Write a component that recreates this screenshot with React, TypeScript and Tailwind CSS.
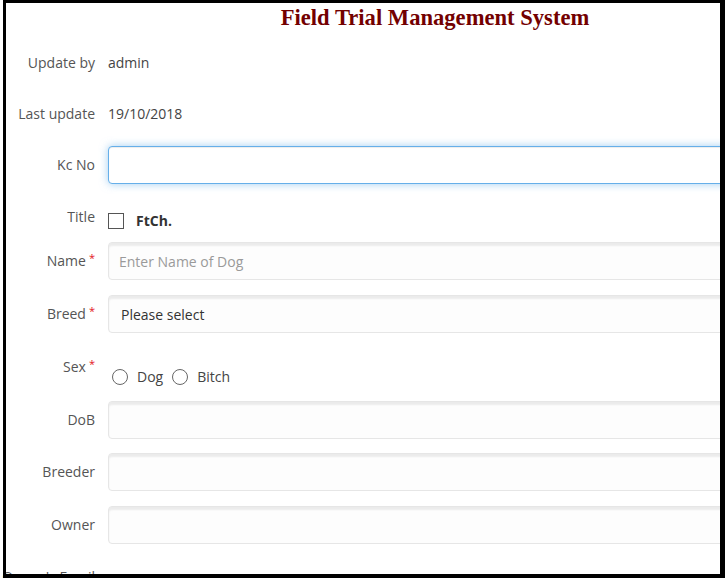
const labelFont = { fontFamily: '"Open Sans", "Liberation Sans", sans-serif' };

function Req() {
  return <span className="relative -top-[4px] ml-[3px] text-[11px] text-[#e3141b]">*</span>;
}

function Row({
  label,
  required,
  className = "",
  children,
}: {
  label: string;
  required?: boolean;
  className?: string;
  children?: React.ReactNode;
}) {
  return (
    <div className={`flex ${className}`}>
      <div className="w-[95px] shrink-0 whitespace-nowrap pt-[9px] text-right text-[14px] leading-[20px] text-[#555]">
        {label}
        {required && <Req />}
      </div>
      <div className="ml-[13px] flex-1">{children}</div>
    </div>
  );
}

function Field({ children }: { children?: React.ReactNode }) {
  return (
    <div className="flex h-[38px] items-center rounded-[4px] border border-[#e6e6e6] bg-[#fdfdfd] shadow-[inset_0_3px_2px_rgba(0,0,0,0.07)]">
      {children}
    </div>
  );
}

export default function App() {
  return (
    <div className="relative h-[578px] w-[725px] overflow-hidden bg-white" style={labelFont}>
      <div className="w-[870px]">
        <h1
          className="pt-[5px] text-center text-[22.6px] font-bold leading-[25px] text-[#730000]"
          style={{ fontFamily: '"Liberation Serif", "Times New Roman", serif' }}
        >
          Field Trial Management System
        </h1>

        <Row label="Update by" className="mt-[14px] h-[38px]">
          <div className="pt-[9px] text-[14px] leading-[20px] text-[#444]">admin</div>
        </Row>

        <Row label="Last update" className="mt-[13px] h-[38px]">
          <div className="pt-[9px] text-[14px] leading-[20px] text-[#444]">19/10/2018</div>
        </Row>

        <Row label="Kc No" className="mt-[13px]">
          <div className="h-[38px] rounded-[4px] border border-[#66afe9] bg-white shadow-[inset_0_1px_1px_rgba(0,0,0,0.075),0_0_8px_rgba(102,175,233,0.6)]" />
        </Row>

        <Row label="Title" className="mt-[14px] h-[44px]">
          <div className="mt-[12px] flex items-center">
            <span className="h-[16px] w-[16px] border-[1.5px] border-[#555] bg-white" />
            <span className="ml-[12px] text-[14px] font-bold text-[#333]">FtCh.</span>
          </div>
        </Row>

        <Row label="Name" required>
          <Field>
            <span className="pl-[10px] text-[14px] text-[#9a9a9a]">Enter Name of Dog</span>
          </Field>
        </Row>

        <Row label="Breed" required className="mt-[15px]">
          <Field>
            <span className="pl-[12px] text-[14px] text-[#333]">Please select</span>
          </Field>
        </Row>

        <Row label="Sex" required className="mt-[15px] h-[38px]">
          <div className="mt-[18px] flex items-center pl-[4px] text-[14px] text-[#444]">
            <span className="h-[16px] w-[16px] rounded-full border border-[#666] bg-white" />
            <span className="ml-[9px]">Dog</span>
            <span className="ml-[9px] h-[16px] w-[16px] rounded-full border border-[#666] bg-white" />
            <span className="ml-[9px]">Bitch</span>
          </div>
        </Row>

        <Row label="DoB" className="mt-[15px]">
          <Field />
        </Row>

        <Row label="Breeder" className="mt-[14px]">
          <Field />
        </Row>

        <Row label="Owner" className="mt-[15px]">
          <Field />
        </Row>

        <Row label="Owner's Email" className="mt-[14px]" />
      </div>

      <div className="pointer-events-none absolute bottom-0 left-[3px] right-0 top-0 border-b-[4px] border-l-[3px] border-r-[5px] border-t-[3px] border-black" />
    </div>
  );
}
